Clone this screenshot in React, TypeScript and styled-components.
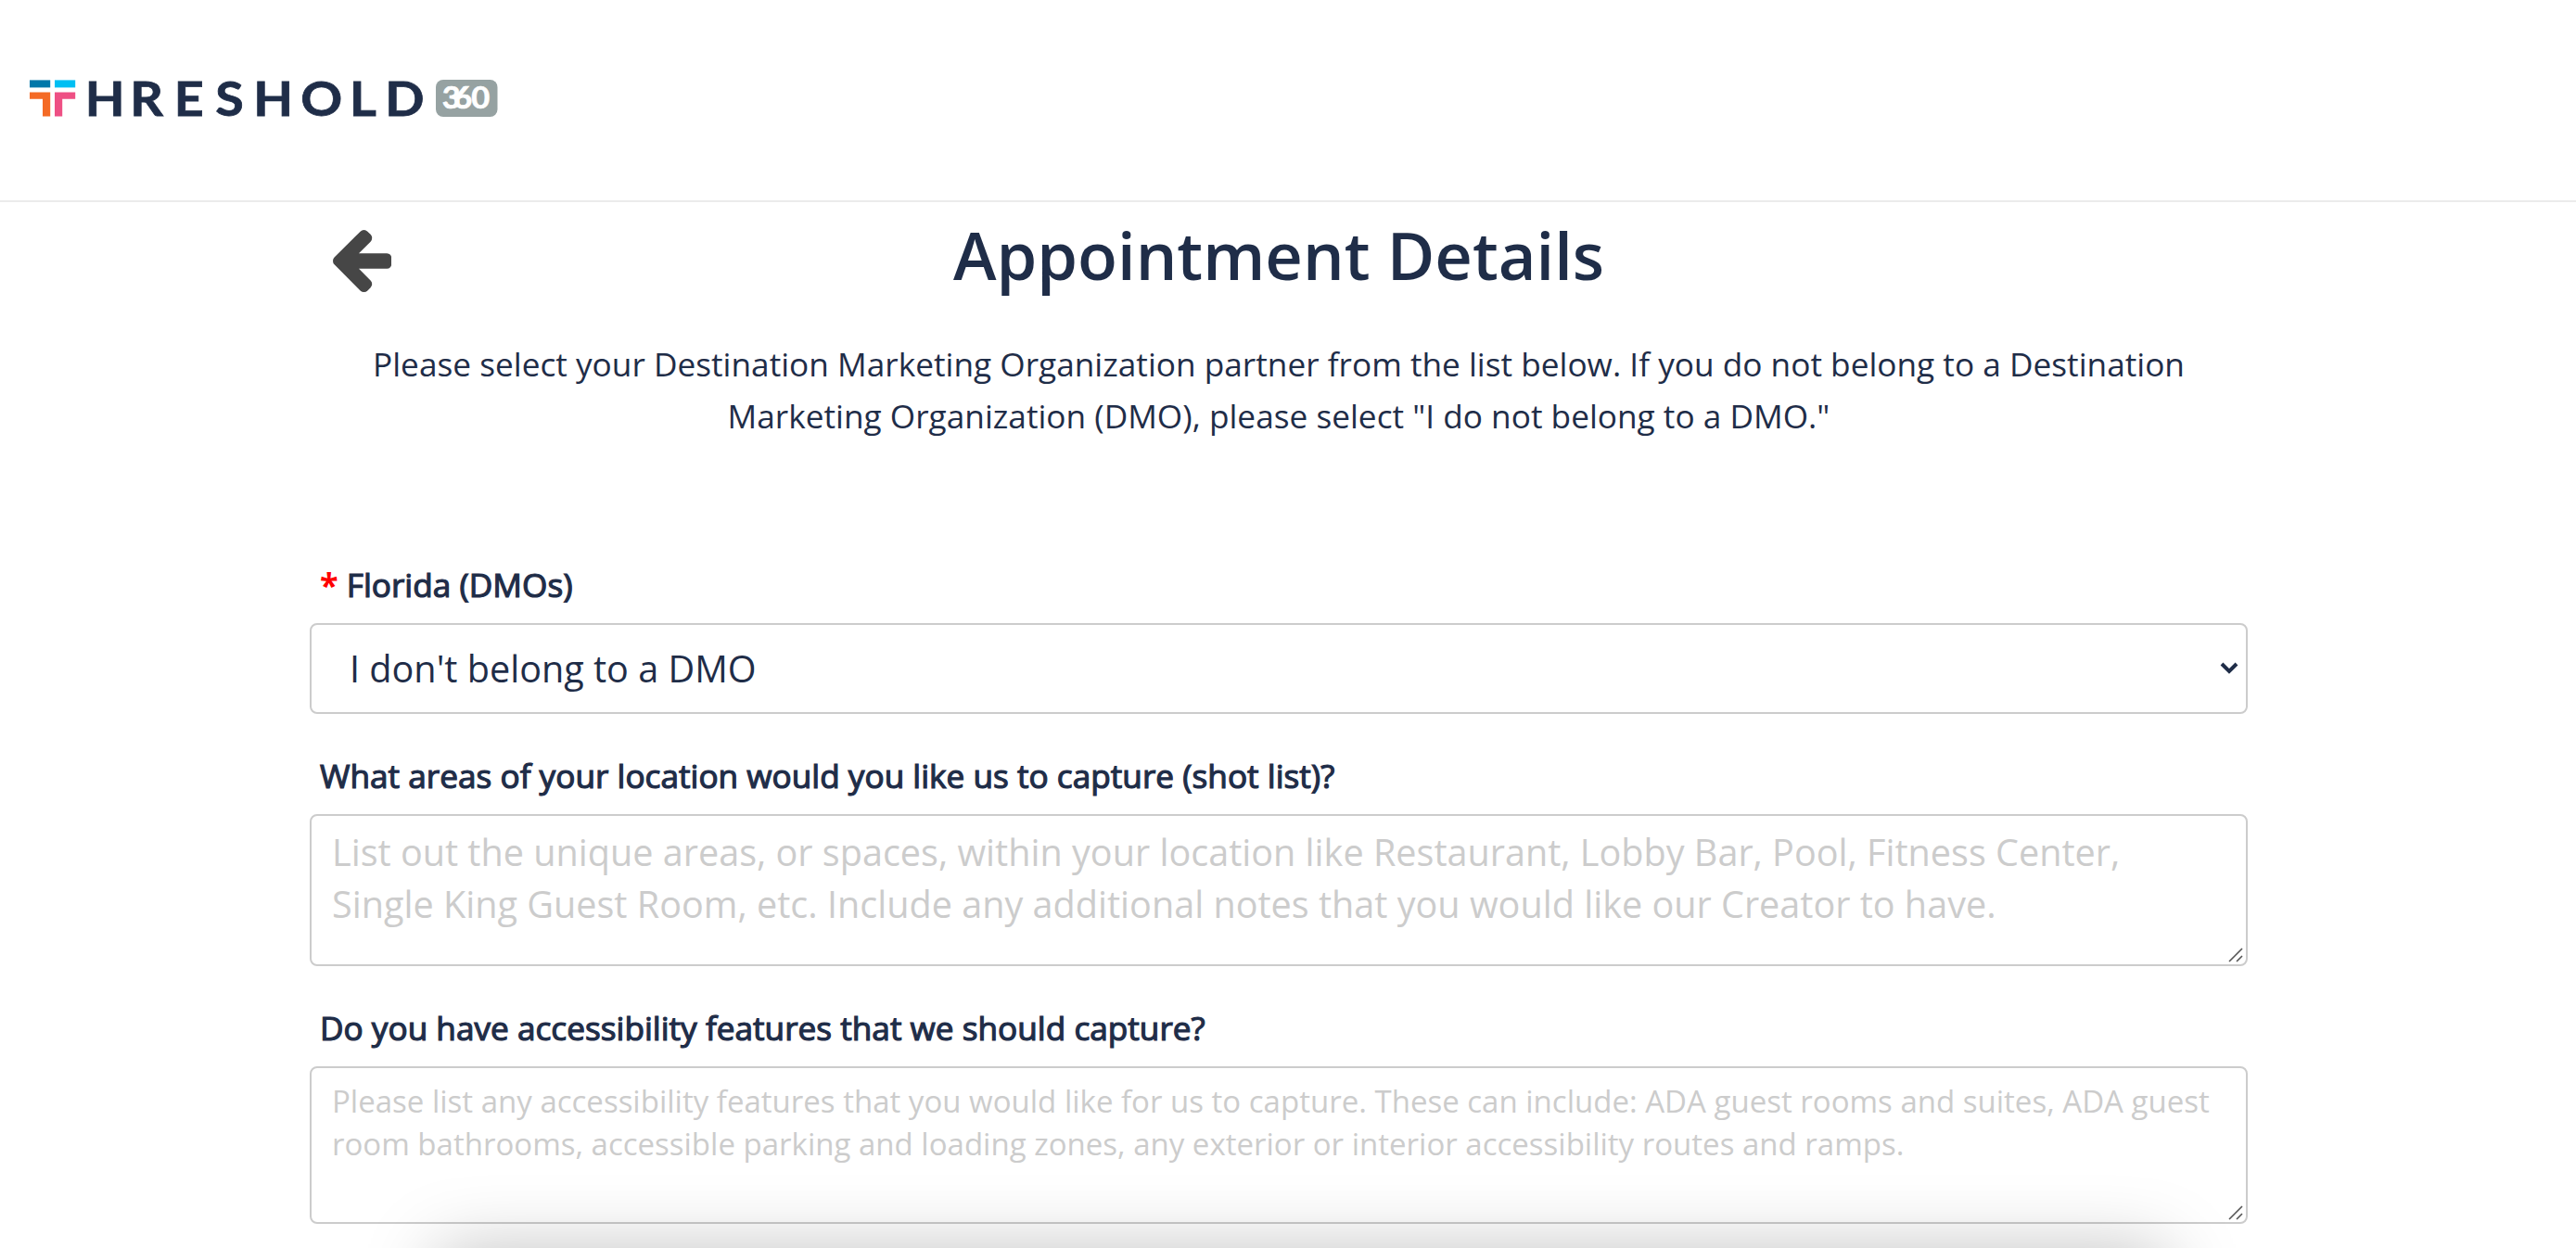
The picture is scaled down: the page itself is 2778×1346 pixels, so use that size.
import React, { useState } from "react"
import styled, { createGlobalStyle } from "styled-components"

const GlobalStyle = createGlobalStyle`
  *,
  *::before,
  *::after {
    box-sizing: border-box;
  }

  body {
    margin: 0;
    overflow: hidden;
    background: #fff;
    color: #1f2d48;
    font-family: "Open Sans", sans-serif;
  }
`

const Page = styled.div`
  height: 1346px;
  overflow: hidden;
  position: relative;
`

const Header = styled.header`
  height: 218px;
  padding: 64px 0 0 30px;
  border-bottom: 2px solid #ebebeb;
`

const Content = styled.main`
  width: 2090px;
  margin-left: 334px;
`

const TitleRow = styled.div`
  display: grid;
  grid-template-columns: 90px 1fr 90px;
  align-items: start;
  height: 130px;
`

const BackButton = styled.button`
  display: flex;
  padding: 29.5px 0 0 25px;
  border: 0;
  background: none;
  color: #464646;
`

const Title = styled.h1`
  margin: 0;
  padding-top: 8px;
  font-size: 70.4px;
  font-weight: 600;
  line-height: 98px;
  text-align: center;
`

const Intro = styled.p`
  margin: 0;
  height: 257px;
  padding: 16px 60px 0;
  font-size: 35.23px;
  line-height: 56px;
  text-align: center;
`

const Field = styled.div`
  display: flex;
  flex-direction: column;
  margin-bottom: 41px;
`

const Label = styled.label`
  height: 67px;
  padding: 1px 0 0 11px;
  font-size: 35.2px;
  line-height: 48px;
  -webkit-text-stroke: 1.2px currentColor;
`

const Required = styled.span`
  color: #f00;
  font-size: 36px;
  font-weight: 700;
  -webkit-text-stroke: 0;
`

const Control = styled.div`
  display: grid;

  > * {
    grid-area: 1 / 1;
  }
`

const Select = styled.select`
  appearance: none;
  height: 98px;
  padding: 0 41px;
  border: 2px solid #ccc;
  border-radius: 8px;
  background: #fff;
  color: inherit;
  font: 400 39.6px "Open Sans", sans-serif;
`

const Chevron = styled.svg`
  place-self: center end;
  margin-right: 9px;
  pointer-events: none;
`

const TextArea = styled.textarea<{ $small?: boolean }>`
  resize: none;
  height: ${({ $small }) => ($small ? 170 : 164)}px;
  padding: ${({ $small }) => ($small ? 13 : 11)}px 22px 10px;
  border: 2px solid #ccc;
  border-radius: 8px;
  overflow: hidden;
  color: inherit;
  font-family: "Open Sans", sans-serif;
  font-size: ${({ $small }) => ($small ? 33.02 : 39.6)}px;
  line-height: ${({ $small }) => ($small ? 46 : 56)}px;

  &::placeholder {
    color: #ccc;
    opacity: 1;
  }
`

const Grip = styled.svg`
  place-self: end;
  margin: 0 5px 4px 0;
  pointer-events: none;
`

// sits just past the bottom edge, only its shadow reaches into view
const BottomBar = styled.div`
  position: absolute;
  left: 472px;
  top: 1350px;
  width: 1864px;
  height: 200px;
  box-shadow: 0 0 80px rgba(0, 0, 0, 0.26);
`

const Wordmark = styled.text`
  fill: #1f2d48;
  stroke: #1f2d48;
  stroke-width: 0.8px;
  font: 700 52.5px Lato, sans-serif;
`

const BadgeText = styled.text`
  fill: #fff;
  stroke: #fff;
  stroke-width: 0.7px;
  font: 700 32.5px Lato, sans-serif;
`

const Logo = () => (
  <svg width="510" height="84" viewBox="30 64 510 84">
    <path fill="#0077a9" d="M32 86.4h22.2v8H32z" />
    <path fill="#00bff3" d="M59 86.4h22.2v8H59z" />
    <path fill="#f46a25" d="M32 99.4h22.2v26H46v-18.6H32z" />
    <path fill="#ee5084" d="M59 99.4h22.2v7.4H67.2v18.6H59z" />
    <Wordmark
      transform="scale(1.06 1)"
      x="86.6 132.2 177.1 219 257.8 305.9 355.6 391.8"
      y="125"
    >
      HRESHOLD
    </Wordmark>
    <rect x="470" y="86" width="66.5" height="40" rx="8" fill="#96a2a2" />
    <BadgeText transform="scale(1.06 1)" x="449.7 461.6 479.5" y="117.4">
      360
    </BadgeText>
  </svg>
)

const ArrowLeft = () => (
  <svg width="63.3" height="67" viewBox="192 181 1472 1558" fill="currentColor">
    <path d="M1664 896v128q0 53-32.5 90.5t-84.5 37.5h-704l293 294q38 36 38 90t-38 90l-75 76q-37 37-90 37-52 0-91-37l-651-652q-37-37-37-90 0-52 37-91l651-650q38-38 91-38 52 0 90 38l75 74q38 38 38 91t-38 91l-293 293h704q52 0 84.5 37.5t32.5 90.5z" />
  </svg>
)

const ResizeGrip = () => (
  <Grip width="16" height="16" viewBox="0 0 16 16" stroke="#555" strokeWidth="1.6">
    <path d="M1 15 15 1M9 15l6-6" />
  </Grip>
)

const App = () => {
  const [dmo, setDmo] = useState("none")
  const [shotList, setShotList] = useState("")
  const [accessibility, setAccessibility] = useState("")

  return (
    <>
      <GlobalStyle />
      <Page>
        <Header>
          <Logo />
        </Header>
        <Content>
          <TitleRow>
            <BackButton aria-label="Back">
              <ArrowLeft />
            </BackButton>
            <Title>Appointment Details</Title>
          </TitleRow>
          <Intro>
            Please select your Destination Marketing Organization partner from
            the list below. If you do not belong to a Destination Marketing
            Organization (DMO), please select "I do not belong to a DMO."
          </Intro>

          <Field>
            <Label htmlFor="dmo">
              <Required>*</Required> Florida (DMOs)
            </Label>
            <Control>
              <Select
                id="dmo"
                value={dmo}
                onChange={(e) => setDmo(e.target.value)}
              >
                <option value="none">I don't belong to a DMO</option>
              </Select>
              <Chevron
                width="22"
                height="16"
                viewBox="0 0 22 16"
                fill="none"
                stroke="#1f2d48"
                strokeWidth="4"
              >
                <path d="M3 3l8 8 8-8" />
              </Chevron>
            </Control>
          </Field>

          <Field>
            <Label htmlFor="shotList">
              What areas of your location would you like us to capture (shot
              list)?
            </Label>
            <Control>
              <TextArea
                id="shotList"
                placeholder="List out the unique areas, or spaces, within your location like Restaurant, Lobby Bar, Pool, Fitness Center, Single King Guest Room, etc. Include any additional notes that you would like our Creator to have."
                value={shotList}
                onChange={(e) => setShotList(e.target.value)}
              />
              <ResizeGrip />
            </Control>
          </Field>

          <Field>
            <Label htmlFor="accessibility">
              Do you have accessibility features that we should capture?
            </Label>
            <Control>
              <TextArea
                id="accessibility"
                $small
                placeholder="Please list any accessibility features that you would like for us to capture. These can include: ADA guest rooms and suites, ADA guest room bathrooms, accessible parking and loading zones, any exterior or interior accessibility routes and ramps."
                value={accessibility}
                onChange={(e) => setAccessibility(e.target.value)}
              />
              <ResizeGrip />
            </Control>
          </Field>
        </Content>
        <BottomBar />
      </Page>
    </>
  )
}

export default App
